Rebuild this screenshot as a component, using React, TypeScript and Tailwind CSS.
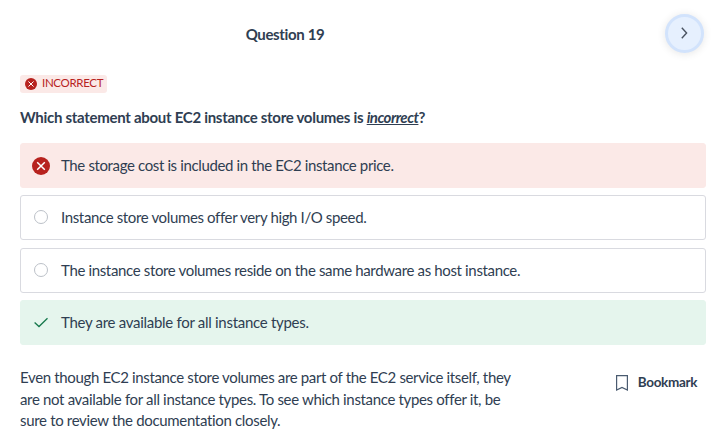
import React from "react";

type Answer = { text: string; state: "wrong" | "idle" | "right"; fit: string };

const answers: Answer[] = [
  { text: "The storage cost is included in the EC2 instance price.", state: "wrong", fit: "tracking-[-0.37px]" },
  { text: "Instance store volumes offer very high I/O speed.", state: "idle", fit: "tracking-[-0.36px] pb-px" },
  { text: "The instance store volumes reside on the same hardware as host instance.", state: "idle", fit: "tracking-[-0.35px]" },
  { text: "They are available for all instance types.", state: "right", fit: "tracking-[-0.29px]" },
];

const rowStyles = {
  wrong: "border-[#fbe9e7] bg-[#fbe9e7]",
  idle: "border-[#d9dae0] bg-white",
  right: "border-[#e5f5ed] bg-[#e5f5ed]",
};

function CrossIcon({ className }: { className: string }) {
  return (
    <svg viewBox="0 0 18 18" className={className}>
      <circle cx="9" cy="9" r="9" fill="#b7221e" />
      <path d="M5.200 5.200l7.600 7.600M12.800 5.200l-7.600 7.600" stroke="#fff" strokeWidth="1.5" />
    </svg>
  );
}

function StateIcon({ state }: { state: Answer["state"] }) {
  if (state === "wrong") return <CrossIcon className="size-[18px]" />;
  if (state === "idle") return <span className="mx-0.5 size-3.5 rounded-full border border-[#bcc1c8]" />;
  return (
    <svg viewBox="0 0 18 18" className="size-[18px]" fill="none" stroke="#16784c" strokeWidth="1.3">
      <path d="M2.600 9.400l4.400 4.100 8.500-8.300" />
    </svg>
  );
}

export default function App() {
  return (
    <main className="h-[443px] w-[722px] overflow-hidden bg-white pr-4 pl-5 font-['Lato',sans-serif] text-[15px] tracking-[-0.35px] text-[#2f3e52]">
      <header className="flex h-[66px] items-center">
        <h1 className="w-[530px] pt-0.5 text-center text-[15px] font-bold">Question 19</h1>
        <button className="mr-[2px] ml-auto flex size-[39px] items-center justify-center rounded-full border-3 border-[#d2e3fc] bg-[#e6f0fe] shadow-[0_1px_8px_rgba(0,0,0,0.1)]">
          <svg viewBox="0 0 16 16" className="size-4 shrink-0" fill="none" stroke="#4a5361" strokeWidth="1.4">
            <path d="M4.800 2.800L9.600 8l-4.800 5.200" />
          </svg>
        </button>
      </header>
      <div className="mt-[9px] flex h-[18px] w-[87px] items-center gap-[5px] rounded-[3px] bg-[#fbe9e7] pl-[5px] text-[11.500px] tracking-[-0.33px] text-[#b7221e]">
        <CrossIcon className="size-3 shrink-0" />
        <span className="pb-[2px]">INCORRECT</span>
      </div>
      <h2 className="mt-[14px] h-9 leading-[21px] font-bold tracking-[-0.29px]">
        Which statement about EC2 instance store volumes is{" "}
        <em className="tracking-[-0.5px] underline">incorrect</em>?
      </h2>
      <div className="flex flex-col gap-[7.330px]">
        {answers.map((a) => (
          <div key={a.text} className={`flex h-[45px] items-center gap-[11px] rounded-[3px] border pl-[11px] ${a.fit} ${rowStyles[a.state]}`}>
            <StateIcon state={a.state} />
            {a.text}
          </div>
        ))}
      </div>
      <footer className="mt-[22.200px] flex items-start justify-between">
        <p className="w-[510px] leading-[21.500px]">
          Even though EC2 instance store volumes are part of the EC2 service itself, they<br />
          <span className="tracking-[-0.335px]">
            are not available for all instance types. To see which instance types offer it, be
          </span>
          <br />
          <span className="tracking-[-0.325px]">sure to review the documentation closely.</span>
        </p>
        <button className="mt-[5px] mr-[9px] flex items-center gap-[10px] text-[13.500px] font-bold tracking-[-0.35px]">
          <svg viewBox="0 0 12 16" className="mt-px h-4 w-3" fill="none" stroke="#4a5b70" strokeWidth="1.2">
            <path d="M.6.600h10.800v14.400L6 12.500.6 15z" />
          </svg>
          Bookmark
        </button>
      </footer>
    </main>
  );
}
